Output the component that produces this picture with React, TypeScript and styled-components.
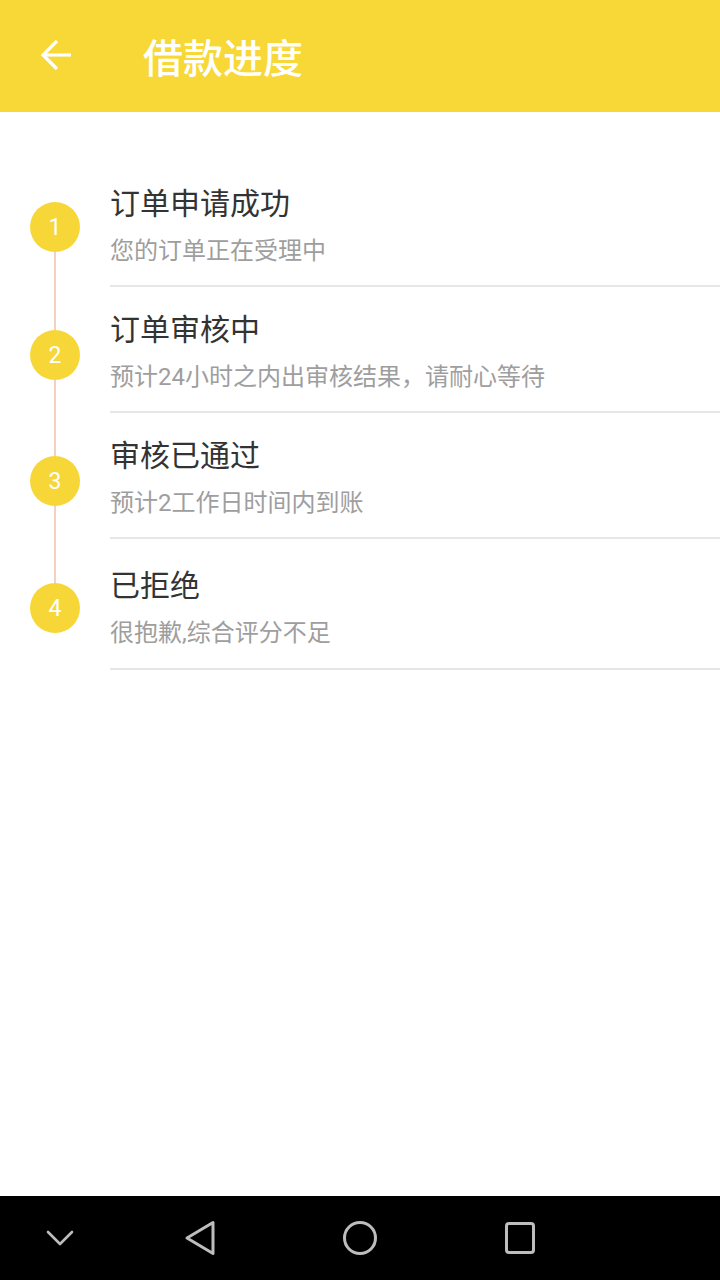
import React from "react";
import styled, { createGlobalStyle } from "styled-components";

const GlobalStyle = createGlobalStyle`
  html, body {
    margin: 0;
    padding: 0;
    background: #ffffff;
  }
  body {
    font-family: Roboto, "Noto Sans CJK SC", sans-serif;
  }
  * { box-sizing: border-box; }
`;

const Page = styled.div`
  width: 720px;
  height: 1280px;
  display: flex;
  flex-direction: column;
  background: #ffffff;
  overflow: hidden;
`;

const Toolbar = styled.header`
  height: 112px;
  flex: 0 0 112px;
  background: #f8d837;
  display: flex;
  align-items: center;
  padding-left: 40px;
`;

const BackButton = styled.button`
  width: 32px;
  height: 32px;
  padding: 0;
  border: 0;
  background: transparent;
  display: flex;
  align-items: center;
  justify-content: center;
  margin-top: -2px;
`;

const ToolbarTitle = styled.h1`
  margin: 8px 0 0 71px;
  font-size: 40px;
  line-height: 48px;
  font-weight: 500;
  color: #ffffff;
  font-family: Roboto, "Noto Sans CJK SC", sans-serif;
`;

const Content = styled.main`
  flex: 1;
  padding-top: 49px;
  display: flex;
  flex-direction: column;
`;

const Row = styled.div<{ $last?: boolean }>`
  display: flex;
  height: ${(p) => (p.$last ? 131 : 126)}px;
`;

const Rail = styled.div`
  width: 110px;
  flex: 0 0 110px;
  display: flex;
  flex-direction: column;
  align-items: center;
`;

const Segment = styled.div<{ $visible: boolean; $h?: number }>`
  width: 2px;
  background: ${(p) => (p.$visible ? "#f7cfbe" : "transparent")};
  ${(p) => (p.$h !== undefined ? `height: ${p.$h}px; flex: 0 0 ${p.$h}px;` : "flex: 1;")}
`;

const StepDot = styled.div`
  width: 50px;
  height: 50px;
  flex: 0 0 50px;
  border-radius: 50%;
  background: #f7d737;
  color: #ffffff;
  display: flex;
  align-items: center;
  justify-content: center;
  font-family: Roboto, sans-serif;
  font-size: 23px;
  line-height: 1;
`;

const Body = styled.div<{ $last?: boolean }>`
  flex: 1;
  display: flex;
  flex-direction: column;
  padding-top: ${(p) => (p.$last ? 27 : 23)}px;
  border-bottom: 2px solid #e6e6e6;
`;

const StepTitle = styled.div`
  font-size: 30px;
  line-height: 40px;
  color: #333333;
`;

const StepDesc = styled.div`
  margin-top: 11px;
  font-size: 24px;
  line-height: 32px;
  color: #9e9e9e;
`;

const NavBar = styled.nav`
  height: 84px;
  flex: 0 0 84px;
  background: #000000;
  display: grid;
  grid-template-columns: 120px 160px 160px 160px;
  align-items: center;
`;

const NavCell = styled.div`
  display: flex;
  align-items: center;
  justify-content: center;
`;

const steps = [
  { title: "订单申请成功", desc: "您的订单正在受理中" },
  { title: "订单审核中", desc: "预计24小时之内出审核结果，请耐心等待" },
  { title: "审核已通过", desc: "预计2工作日时间内到账" },
  { title: "已拒绝", desc: "很抱歉,综合评分不足" },
];

export default function App() {
  return (
    <>
      <GlobalStyle />
      <Page>
        <Toolbar>
          <BackButton aria-label="back">
            <svg width="32" height="32" viewBox="0 0 32 32" fill="none">
              <path d="M3 16 H31" stroke="#fff" strokeWidth="3.2" />
              <path d="M17 2 L3 16 L17 30" stroke="#fff" strokeWidth="3.2" strokeLinejoin="miter" />
            </svg>
          </BackButton>
          <ToolbarTitle>借款进度</ToolbarTitle>
        </Toolbar>
        <Content>
          {steps.map((s, i) => {
            const last = i === steps.length - 1;
            return (
              <Row key={i} $last={last}>
                <Rail>
                  <Segment $visible={i !== 0} $h={last ? 44 : i === 0 ? 41 : 43} />
                  <StepDot>{i + 1}</StepDot>
                  <Segment $visible={!last} />
                </Rail>
                <Body $last={last}>
                  <StepTitle>{s.title}</StepTitle>
                  <StepDesc>{s.desc}</StepDesc>
                </Body>
              </Row>
            );
          })}
        </Content>
        <NavBar>
          <NavCell>
            <svg width="28" height="16" viewBox="0 0 28 16" fill="none">
              <path d="M2 2 L14 14 L26 2" stroke="#bdbdbd" strokeWidth="2.6" strokeLinecap="round" strokeLinejoin="round" />
            </svg>
          </NavCell>
          <NavCell>
            <svg width="32" height="36" viewBox="0 0 32 36" fill="none">
              <path d="M3 18 L29 2.5 V33.5 Z" stroke="#bdbdbd" strokeWidth="3" strokeLinejoin="round" />
            </svg>
          </NavCell>
          <NavCell>
            <svg width="36" height="36" viewBox="0 0 36 36" fill="none">
              <circle cx="18" cy="18" r="15.5" stroke="#bdbdbd" strokeWidth="3" />
            </svg>
          </NavCell>
          <NavCell>
            <svg width="32" height="34" viewBox="0 0 32 34" fill="none">
              <rect x="2.5" y="2.5" width="27" height="29" rx="2.5" stroke="#bdbdbd" strokeWidth="3" />
            </svg>
          </NavCell>
        </NavBar>
      </Page>
    </>
  );
}
